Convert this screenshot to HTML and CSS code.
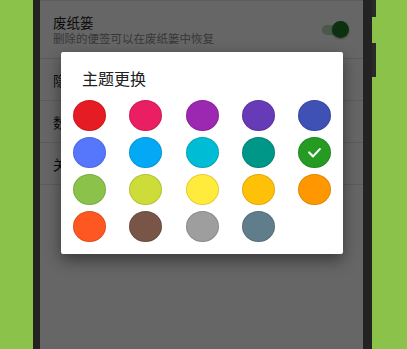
FILE: index.html
```html
<!DOCTYPE html>
<html lang="zh">
<head>
<meta charset="utf-8">
<link rel="stylesheet" href="styles.css">
</head>
<body>
<div class="phone">
  <div class="side-btn side-btn-a"></div>
  <div class="side-btn side-btn-b"></div>
  <div class="screen">
    <div class="list">
      <div class="row row-tall">
        <div class="row-text">
          <div class="row-title">废纸篓</div>
          <div class="row-sub">删除的便签可以在废纸篓中恢复</div>
        </div>
        <div class="switch"><div class="switch-track"></div><div class="switch-thumb"></div></div>
      </div>
      <div class="row"><div class="row-title">隐私</div></div>
      <div class="row"><div class="row-title">数据</div></div>
      <div class="row"><div class="row-title">关于</div></div>
    </div>
    <div class="scrim"></div>
    <div class="dialog">
      <div class="dialog-title">主题更换</div>
      <div class="swatches">
        <div class="dot c-red"></div>
        <div class="dot c-pink"></div>
        <div class="dot c-purple"></div>
        <div class="dot c-deeppurple"></div>
        <div class="dot c-indigo"></div>
        <div class="dot c-blue"></div>
        <div class="dot c-lightblue"></div>
        <div class="dot c-cyan"></div>
        <div class="dot c-teal"></div>
        <div class="dot c-green"><svg class="check" viewBox="0 0 32 31" width="32" height="31"><polyline points="10.5,15.5 14.5,19.5 21.5,12" fill="none" stroke="#fff" stroke-width="2.2" stroke-linecap="round" stroke-linejoin="round"/></svg></div>
        <div class="dot c-lightgreen"></div>
        <div class="dot c-lime"></div>
        <div class="dot c-yellow"></div>
        <div class="dot c-amber"></div>
        <div class="dot c-orange"></div>
        <div class="dot c-deeporange"></div>
        <div class="dot c-brown"></div>
        <div class="dot c-grey"></div>
        <div class="dot c-bluegrey"></div>
      </div>
    </div>
  </div>
</div>
</body>
</html>
```

FILE: styles.css
```css
html, body {
  margin: 0;
  padding: 0;
  height: 100%;
  overflow: hidden;
}
body {
  background: #8bc34a;
  font-family: "Noto Sans CJK SC", "Noto Sans", sans-serif;
  display: flex;
}
.phone {
  position: relative;
  margin-left: 33px;
  width: 323px;
  height: 349px;
  border-left: 7px solid #232323;
  border-right: 9px solid #232323;
  display: flex;
}
.side-btn {
  position: absolute;
  right: -13px;
  width: 4px;
  background: #2a2a2a;
}
.side-btn-a { top: 0; height: 17px; }
.side-btn-b { top: 43px; height: 34px; }
.screen {
  position: relative;
  flex: 1;
  background: #ffffff;
  overflow: hidden;
}
.list {
  display: flex;
  flex-direction: column;
  border-top: 1px solid #e4e4e4;
}
.row {
  height: 41px;
  border-bottom: 1px solid #e4e4e4;
  display: flex;
  align-items: center;
  padding: 0 15px 0 13px;
}
.row-tall {
  height: 57px;
  align-items: flex-start;
  justify-content: space-between;
}
.row-text {
  padding-top: 13px;
}
.row-title {
  font-size: 13.5px;
  line-height: 16px;
  color: #1c1c1c;
}
.row-sub {
  margin-top: 2px;
  font-size: 11.5px;
  line-height: 13px;
  color: #8a8a8a;
}
.switch {
  position: relative;
  width: 26px;
  height: 17px;
  margin-top: 20px;
}
.switch-track {
  position: absolute;
  left: 0;
  top: 4px;
  width: 24px;
  height: 10px;
  border-radius: 5px;
  background: #b6dcb6;
}
.switch-thumb {
  position: absolute;
  right: -1px;
  top: 0;
  width: 17px;
  height: 17px;
  border-radius: 50%;
  background: #1f7a25;
  box-shadow: 0 1px 2px rgba(0,0,0,0.35);
}
.scrim {
  position: absolute;
  inset: 0;
  background: rgba(0,0,0,0.6);
}
.dialog {
  position: absolute;
  left: 21px;
  top: 52px;
  width: 282px;
  height: 202px;
  box-sizing: border-box;
  background: #ffffff;
  border-radius: 2px;
  box-shadow: 0 6px 16px rgba(0,0,0,0.45);
  padding: 16px 12px 12px 12px;
}
.dialog-title {
  font-size: 16px;
  line-height: 20px;
  color: #212121;
  padding-left: 9px;
  margin-bottom: 12px;
}
.swatches {
  display: grid;
  grid-template-columns: repeat(5, 33px);
  justify-content: space-between;
  row-gap: 6px;
}
.dot {
  width: 33px;
  height: 31px;
  box-sizing: border-box;
  border-radius: 50%;
  border: 1px solid rgba(0,0,0,0.12);
  display: flex;
  align-items: center;
  justify-content: center;
}
.check { display: block; }
.c-red { background: #e51c23; }
.c-pink { background: #e91e63; }
.c-purple { background: #9c27b0; }
.c-deeppurple { background: #673ab7; }
.c-indigo { background: #3f51b5; }
.c-blue { background: #5677fc; }
.c-lightblue { background: #03a9f4; }
.c-cyan { background: #00bcd4; }
.c-teal { background: #009688; }
.c-green { background: #259b24; }
.c-lightgreen { background: #8bc34a; }
.c-lime { background: #cddc39; }
.c-yellow { background: #ffeb3b; }
.c-amber { background: #ffc107; }
.c-orange { background: #ff9800; }
.c-deeporange { background: #ff5722; }
.c-brown { background: #795548; }
.c-grey { background: #9e9e9e; }
.c-bluegrey { background: #607d8b; }
```
